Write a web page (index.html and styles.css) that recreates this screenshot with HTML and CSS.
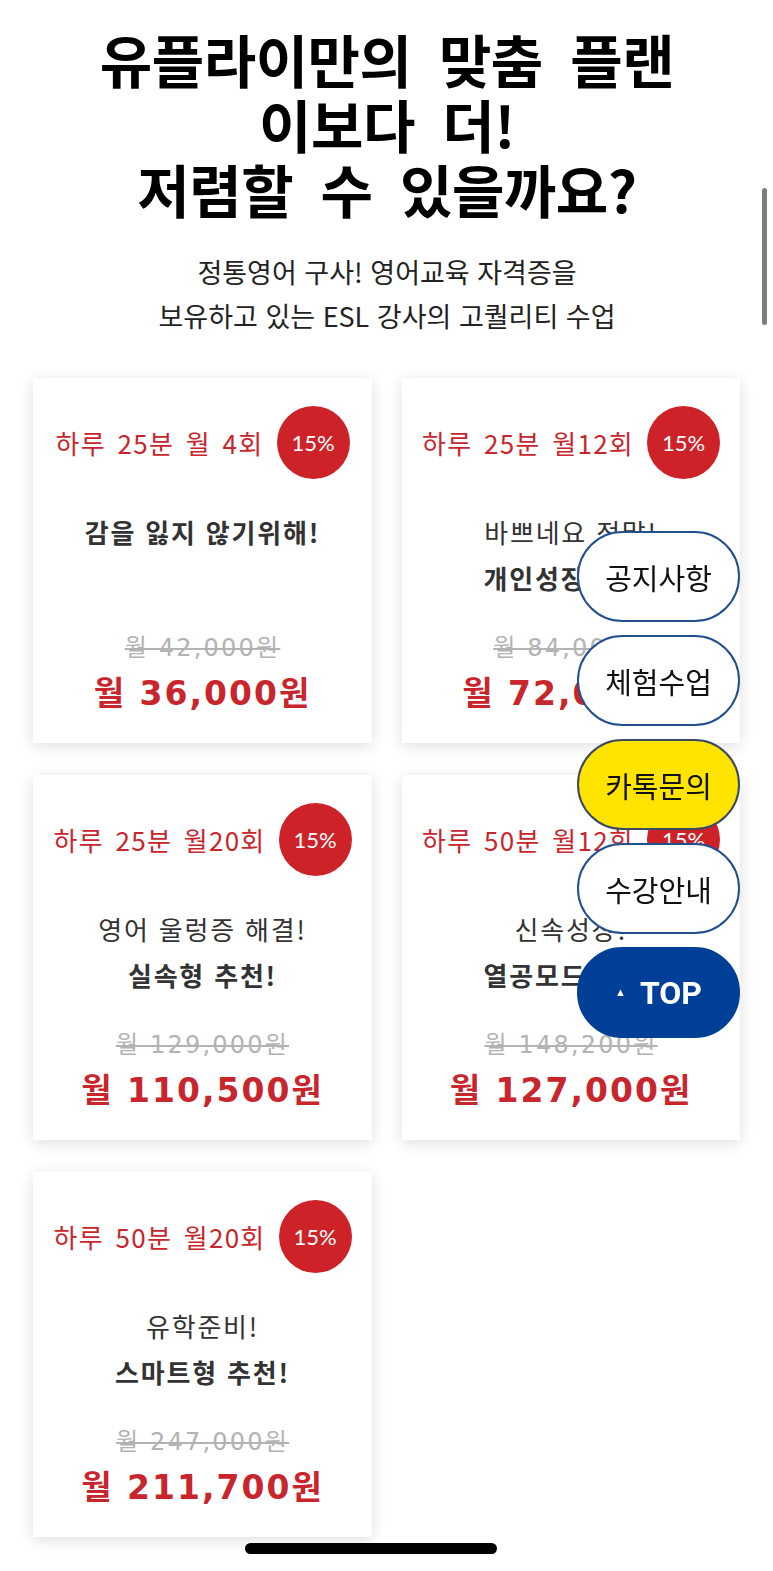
FILE: index.html
```html
<!DOCTYPE html>
<html lang="ko">
<head>
<meta charset="utf-8">
<title>유플라이 맞춤 플랜</title>
<link rel="stylesheet" href="styles.css">
</head>
<body>
<div class="page">
  <header class="hero">
    <h1 class="hero-title">유플라이만의 맞춤 플랜<br>이보다 더!<br>저렴할 수 있을까요?</h1>
    <p class="hero-sub">정통영어 구사! 영어교육 자격증을<br>보유하고 있는 ESL 강사의 고퀄리티 수업</p>
  </header>

  <section class="plans">
    <article class="plan">
      <div class="plan-head"><span class="plan-name">하루 25분 월 4회</span><span class="badge">15%</span></div>
      <div class="plan-desc"><strong>감을 잃지 않기위해!</strong></div>
      <div class="plan-price"><del class="price-old">월 42,000원</del><div class="price-new">월 36,000원</div></div>
    </article>
    <article class="plan">
      <div class="plan-head"><span class="plan-name">하루 25분 월12회</span><span class="badge">15%</span></div>
      <div class="plan-desc">바쁘네요 정말!<br><strong>개인성장 추천!</strong></div>
      <div class="plan-price"><del class="price-old">월 84,000원</del><div class="price-new">월 72,000원</div></div>
    </article>
    <article class="plan">
      <div class="plan-head"><span class="plan-name">하루 25분 월20회</span><span class="badge">15%</span></div>
      <div class="plan-desc">영어 울렁증 해결!<br><strong>실속형 추천!</strong></div>
      <div class="plan-price"><del class="price-old">월 129,000원</del><div class="price-new">월 110,500원</div></div>
    </article>
    <article class="plan">
      <div class="plan-head"><span class="plan-name">하루 50분 월12회</span><span class="badge">15%</span></div>
      <div class="plan-desc">신속성장!<br><strong>열공모드 추천!</strong></div>
      <div class="plan-price"><del class="price-old">월 148,200원</del><div class="price-new">월 127,000원</div></div>
    </article>
    <article class="plan">
      <div class="plan-head"><span class="plan-name">하루 50분 월20회</span><span class="badge">15%</span></div>
      <div class="plan-desc">유학준비!<br><strong>스마트형 추천!</strong></div>
      <div class="plan-price"><del class="price-old">월 247,000원</del><div class="price-new">월 211,700원</div></div>
    </article>
  </section>
</div>

<nav class="quick">
  <a class="quick-btn">공지사항</a>
  <a class="quick-btn">체험수업</a>
  <a class="quick-btn quick-kakao">카톡문의</a>
  <a class="quick-btn">수강안내</a>
  <a class="quick-btn quick-top"><span class="top-arrow">▲</span>TOP</a>
</nav>

<div class="scroll-ind"></div>
<div class="home-ind"></div>
</body>
</html>
```

FILE: styles.css
```css
* { box-sizing: border-box; }

html, body {
  margin: 0;
  padding: 0;
  background: #ffffff;
}

body {
  font-family: "Noto Sans CJK KR", "Noto Sans", sans-serif;
  color: #222;
  width: 773px;
  min-height: 1571px;
  overflow: hidden;
}

.page {
  padding: 26px 32px 0 33px;
}

.hero {
  text-align: center;
}

.hero-title {
  margin: 0;
  font-size: 57px;
  line-height: 65px;
  font-weight: 700;
  color: #000;
  word-spacing: 12px;
  letter-spacing: -0.5px;
}

.hero-sub {
  margin: 29px 0 0;
  font-size: 27px;
  line-height: 44px;
  color: #222;
  font-weight: 400;
}

.plans {
  margin-top: 40px;
  display: grid;
  grid-template-columns: 339px 338px;
  column-gap: 30px;
  row-gap: 32px;
}

.plan {
  height: 365px;
  background: #fff;
  box-shadow: 0 3px 14px rgba(0, 0, 0, 0.13);
  display: flex;
  flex-direction: column;
  align-items: center;
  padding: 28px 8px 24px;
  text-align: center;
}

.plan-head {
  display: flex;
  align-items: center;
  gap: 13px;
  height: 72px;
}

.plan-name {
  color: #c8262c;
  font-size: 26px;
  letter-spacing: 1.3px;
  word-spacing: 3px;
  white-space: nowrap;
}

.badge {
  width: 73px;
  height: 73px;
  border-radius: 50%;
  background: #cc2228;
  color: #fff;
  font-family: "Lato", "Noto Sans", sans-serif;
  font-size: 22px;
  display: flex;
  align-items: center;
  justify-content: center;
  flex: none;
}

.plan-desc {
  margin-top: 31px;
  font-size: 26px;
  line-height: 46px;
  color: #333;
  letter-spacing: 1.8px;
}

.plan-desc strong {
  font-weight: 700;
}

.plan-price {
  margin-top: auto;
  display: flex;
  flex-direction: column;
  align-items: center;
}

.price-old {
  font-family: "DejaVu Sans", "Noto Sans CJK KR", sans-serif;
  font-size: 24px;
  line-height: 42px;
  color: #b3b3b3;
  letter-spacing: 2.2px;
  text-decoration: line-through;
  text-decoration-thickness: 2px;
}

.price-new {
  font-family: "DejaVu Sans", "Noto Sans CJK KR", sans-serif;
  font-size: 33px;
  line-height: 50px;
  font-weight: 700;
  color: #c8262c;
  letter-spacing: 2px;
}

.quick {
  position: fixed;
  top: 531px;
  right: 33px;
  width: 163px;
  display: flex;
  flex-direction: column;
  gap: 13px;
}

.quick-btn {
  height: 91px;
  border: 2px solid #23508f;
  border-radius: 46px;
  background: #fff;
  color: #111;
  font-size: 29px;
  display: flex;
  align-items: center;
  justify-content: center;
}

.quick-kakao {
  background: #ffe400;
  border-color: #3b4a60;
}

.quick-top {
  background: #003f98;
  border-color: #003f98;
  color: #fff;
  font-family: "Roboto", "Noto Sans", sans-serif;
  font-weight: 700;
  font-size: 32px;
}

.top-arrow {
  font-size: 11px;
  margin-right: 14px;
}

.scroll-ind {
  position: fixed;
  left: 762px;
  top: 188px;
  width: 5px;
  height: 137px;
  border-radius: 3px;
  background: #7d7d7d;
}

.home-ind {
  position: fixed;
  left: 245px;
  top: 1543px;
  width: 252px;
  height: 11px;
  border-radius: 6px;
  background: #000;
}
```
